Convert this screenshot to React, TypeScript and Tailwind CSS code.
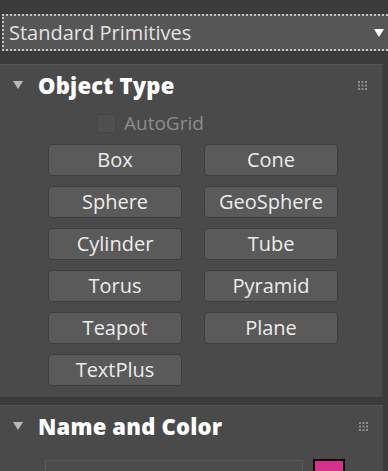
import React from "react";

const primitives = [
  "Box",
  "Cone",
  "Sphere",
  "GeoSphere",
  "Cylinder",
  "Tube",
  "Torus",
  "Pyramid",
  "Teapot",
  "Plane",
  "TextPlus",
];

const font = { fontFamily: '"Open Sans", "Noto Sans", sans-serif' };

const DownTri = ({ className }: { className: string }) => (
  <svg width="10" height="8" viewBox="0 0 10 8" className={className}>
    <path d="M0 0 H10 L5 8 Z" fill="currentColor" />
  </svg>
);

// little 3x3 dot grip on the right of each rollout title
const GripDots = () => (
  <svg width="9" height="9" viewBox="0 0 9 9" className="text-[#8e8e8e]">
    {[1, 4.5, 8].map((y) =>
      [1, 4.5, 8].map((x) => (
        <rect key={`${x}-${y}`} x={x - 1} y={y - 1} width="2" height="2" fill="currentColor" />
      ))
    )}
  </svg>
);

const RolloutHeader = ({ title }: { title: string }) => (
  <div className="h-10 flex items-center pl-[13px] pr-[15px]">
    <DownTri className="text-[#b8b8b8]" />
    <span className="ml-[15px] text-[22px] font-extrabold text-white leading-none tracking-[0.2px]">{title}</span>
    <div className="ml-auto">
      <GripDots />
    </div>
  </div>
);

export default function App() {
  return (
    <div className="w-[388px] h-[471px] bg-[#3b3b3b] overflow-hidden pt-[14px]" style={font}>
      {/* dropdown */}
      <div className="h-[37px] bg-[#565656] border-y-2 border-l-2 border-dotted border-[#c4c4c4] ml-[2px] flex items-center pl-[5px] pr-[4px]">
        <span className="text-[20px] text-[#e4e4e4] leading-none">Standard Primitives</span>
        <DownTri className="ml-auto text-white" />
      </div>

      {/* Object Type rollout */}
      <div className="mt-[13px] mr-[5px] bg-[#4a4a4a] border-t border-[#545454] border-r border-r-[#404040]">
        <RolloutHeader title="Object Type" />
        <div className="mt-[8px] h-5 flex items-center pl-[97px]">
          <div className="w-[19px] h-[19px] bg-[#4f4f4f] border border-[#444] rounded-[2px]" />
          <span className="ml-2 text-[19px] text-[#8c8c8c] leading-none">AutoGrid</span>
        </div>
        <div className="mt-[11px] pl-[48px] pb-[11px] grid grid-cols-[134px_134px] gap-x-[22px] gap-y-[10px]">
          {primitives.map((p) => (
            <button
              key={p}
              className="h-8 bg-[#5a5a5a] border border-[#3e3e3e] rounded-[4px] text-[20px] text-[#ececec] leading-none"
              style={font}
            >
              {p}
            </button>
          ))}
        </div>
      </div>

      {/* Name and Color rollout */}
      <div className="mt-[8px] mr-[5px] bg-[#4a4a4a] border-t border-[#545454] h-[80px]">
        <RolloutHeader title="Name and Color" />
        <div className="mt-[13px] flex pl-[45px]">
          <div className="w-[258px] h-8 bg-[#4c4c4c] border border-[#5a5a5a] mt-px" />
          <div className="ml-[10px] w-[32px] h-8 bg-[#d4318c] border-2 border-black" />
        </div>
      </div>
    </div>
  );
}
